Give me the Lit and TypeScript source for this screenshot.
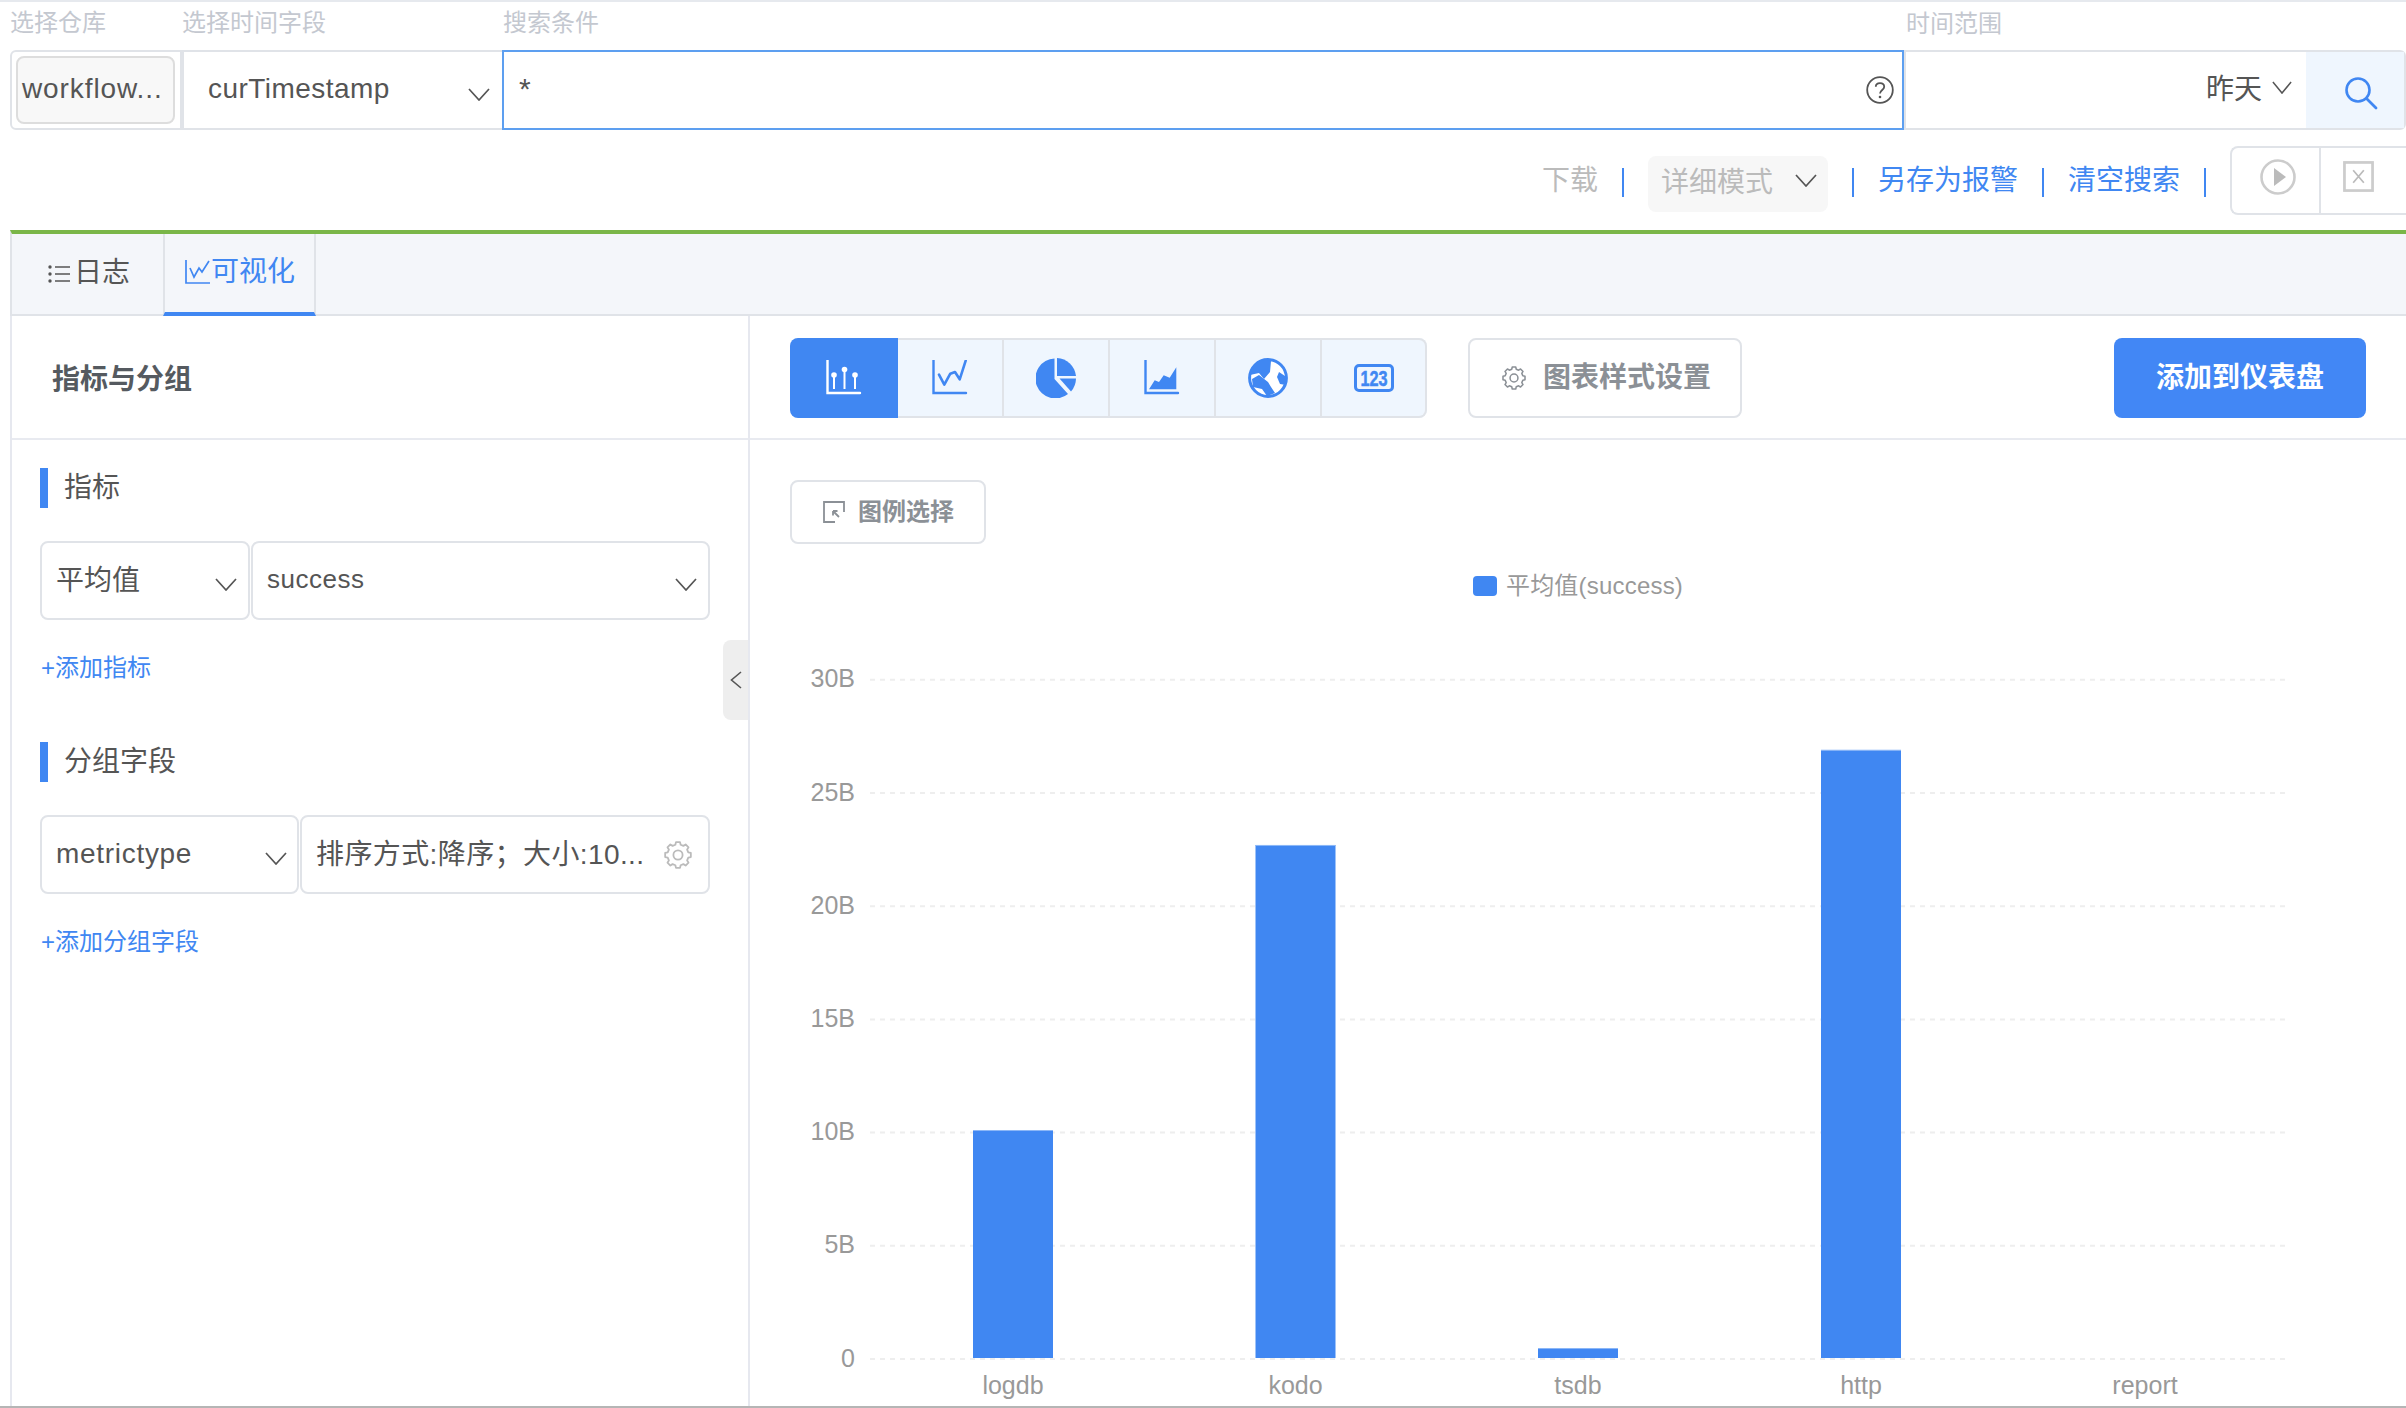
import { LitElement, html, css, svg } from "lit";
import { customElement } from "lit/decorators.js";

const BLUE = "#4087f2";

function gearPath(cx: number, cy: number, ro: number, ri: number, teeth = 8) {
  let d = "";
  const step = (Math.PI * 2) / teeth;
  for (let i = 0; i < teeth; i++) {
    const a = i * step - Math.PI / 2;
    const pts: [number, number][] = [
      [ro, a - step * 0.2],
      [ro, a + step * 0.2],
      [ri, a + step * 0.32],
      [ri, a + step * 0.68],
    ];
    for (const [r, t] of pts) {
      d += `${d ? "L" : "M"}${(cx + r * Math.cos(t)).toFixed(2)} ${(cy + r * Math.sin(t)).toFixed(2)}`;
    }
  }
  return d + "Z";
}

const chevron = (w = 22, h = 13) => html`<svg class="chev" width=${w} height=${h} viewBox="0 0 22 13" preserveAspectRatio="none"><path d="M1 1 L11 12 L21 1" fill="none" stroke="#555" stroke-width="1.7"/></svg>`;

const gear = (size: number, color: string) => html`<svg width=${size} height=${size} viewBox="0 0 28 28"><path d=${gearPath(14, 14, 13, 10.6)} fill="none" stroke=${color} stroke-width="1.8" stroke-linejoin="round"/><circle cx="14" cy="14" r="4.6" fill="none" stroke=${color} stroke-width="1.8"/></svg>`;

const chartIcons = [
  svg`<path d="M1.5 0 V33 H34" fill="none" stroke="currentColor" stroke-width="2.4" stroke-linecap="round"/><g fill="currentColor"><circle cx="8" cy="15" r="2.8"/><circle cx="18.5" cy="9.5" r="2.8"/><circle cx="29" cy="15" r="2.8"/></g><path d="M8 15V29M18.5 9.5V29M29 15V29" stroke="currentColor" stroke-width="2"/>`,
  svg`<path d="M1.5 0 V33 H34" fill="none" stroke="currentColor" stroke-width="2.4" stroke-linecap="round"/><path d="M7 14.7 L12.3 24.7 L18.3 13.7 L23 12 L27.7 19.3 L33.7 .7" fill="none" stroke="currentColor" stroke-width="2.6" stroke-linejoin="round" stroke-linecap="round"/>`,
  svg`<g fill="currentColor"><path d="M18.5 .5 A20 20 0 1 0 32 36 L18.5 21 Z"/><path d="M21 0 A20 20 0 0 1 40 18 L21 18 Z"/><path d="M23.5 20.5 L40 20.5 A20 20 0 0 1 35 33.5 Z"/></g>`,
  svg`<path d="M1.5 0 V33 H34" fill="none" stroke="currentColor" stroke-width="2.4" stroke-linecap="round"/><path fill="currentColor" d="M5 29.3 L10.7 20.3 L15 22 L19.7 15.3 L25.7 17.7 L32.3 7.3 V29.3 Z"/>`,
  svg`<circle cx="20" cy="20" r="18.4" fill="#fff" stroke="currentColor" stroke-width="3"/><g fill="currentColor"><path d="M2 17 L6 8 L12 2 L23 3 L22 14 L16 21 L11 15 Z"/><path d="M4 21 L11 17 L20 24 L23 29 L27 35 L19 38 L14 31 L5 29 Z"/><path d="M31 14 L37 18 L38 27 L32 26 L29 19 Z"/></g>`,
  svg`<rect x="1.5" y="7.5" width="37" height="25" rx="3.5" fill="none" stroke="currentColor" stroke-width="3"/><text transform="translate(20 28) scale(.74 1)" text-anchor="middle" fill="currentColor" stroke="currentColor" stroke-width=".5" font-family="'Liberation Sans',sans-serif" font-weight="700" font-size="22">123</text>`,
];
const iconBoxes: [number, number][] = [[36, 36], [36, 36], [40, 40], [36, 36], [40, 40], [40, 40]];

const bars = [
  { label: "logdb", cx: 1013, v: 10.07 },
  { label: "kodo", cx: 1295.5, v: 22.66 },
  { label: "tsdb", cx: 1578, v: 0.44 },
  { label: "http", cx: 1861, v: 26.86 },
  { label: "report", cx: 2145, v: 0 },
];

@customElement("app-root")
export class AppRoot extends LitElement {
  static styles = css`
    :host { display: block; width: 2406px; height: 1408px; overflow: hidden; background: #fff; color: #555;
      font-family: "Liberation Sans", "Noto Sans CJK SC", sans-serif; box-sizing: border-box; border-top: 2px solid #e6e9ee; }
    * { box-sizing: border-box; }
    .labels { height: 48px; display: flex; align-items: center; padding: 0 0 12px 10px; color: #c4c8d0; font-size: 24px; }
    .labels span:nth-child(1) { width: 172px; }
    .labels span:nth-child(2) { width: 321px; }
    .labels span:nth-child(3) { width: 1403px; }
    .labels span:nth-child(4) { padding-top: 3px; }
    .query { height: 80px; margin-left: 10px; display: flex; font-size: 28px; color: #555; }
    .cell { border: 2px solid #e0e3e8; display: flex; align-items: center; }
    .repo { width: 174px; border-right-width: 4px; border-radius: 6px 0 0 6px; padding-left: 4px; }
    .repo div { width: 159px; height: 68px; background: #f8f8f8; border: 2px solid #ddd; border-radius: 8px; display: flex; align-items: center; padding: 0 0 3px 4px; letter-spacing: .9px; white-space: nowrap; }
    .tsf { width: 318px; border-left: 0; border-right: 0; justify-content: space-between; padding: 0 12px 0 24px; letter-spacing: .45px; }
    .tsf span { padding-bottom: 2px; }
    .tsf .chev { margin-top: 8px; }
    .search { width: 1402px; border-color: #5d9ff0; justify-content: space-between; padding: 0 8px 0 15px; }
    .star { margin-top: -3px; font-size: 30px; }
    .range { flex: 1; border-left: 2px solid #e0e3e8; border-radius: 0 6px 6px 0; justify-content: flex-end; align-items: stretch; }
    .rangeval { display: flex; align-items: center; gap: 10px; padding-right: 14px; }
    .rangeval span { margin-top: -6px; }
    .rangeval .chev { margin-top: -6px; }
    .go { width: 98px; background: #eff6fe; display: flex; align-items: center; justify-content: center; padding: 6px 0 0 12px; }
    .actions { height: 100px; padding-top: 16px; display: flex; justify-content: flex-end; align-items: flex-start; gap: 24px; font-size: 28px; }
    .actions > * { height: 69px; display: flex; align-items: center; }
    .up { padding-bottom: 6px; }
    .muted { color: #bbb; }
    .sep { width: 2px; height: 29px !important; background: #4087f2; margin-top: 22px; }
    .mode { width: 180px; height: 56px !important; margin-top: 10px; background: #f7f7f7; border-radius: 8px; color: #bbb; padding: 0 11px 0 13px; justify-content: space-between; }
    .mode span { padding-bottom: 8px; }
    .mode .chev { margin-bottom: 8px; }
    .link { color: #4087f2; }
    .ctrl { width: 176px; border: 2px solid #e0e3e8; border-right: 0; border-radius: 8px 0 0 8px; }
    .ctrl div { height: 100%; display: flex; align-items: center; justify-content: center; padding-bottom: 8px; }
    .ctrl div:first-child { width: 89px; border-right: 2px solid #e0e3e8; padding-left: 4px; }
    .ctrl div:last-child { flex: 1; padding-right: 10px; }
    .main { height: 1178px; display: flex; flex-direction: column; border-bottom: 2px solid #b5b5b5; padding-left: 10px; }
    .tabs { height: 86px; flex: none; border-top: 4px solid #7ab648; border-left: 2px solid #e0e3e8; border-bottom: 2px solid #e0e3e8; background: #f4f6fa; display: flex; font-size: 28px; }
    .tab { width: 151px; height: 80px; display: flex; align-items: center; padding-left: 36px; gap: 4px; color: #555; }
    .tab span { padding-bottom: 8px; }
    .tab.on { width: 153px; color: #4087f2; border-left: 2px solid #e0e3e8; border-right: 2px solid #e0e3e8; border-bottom: 4px solid #4087f2; height: 82px; padding: 0 0 2px 20px; gap: 1px; }
    .tab.on span { padding-bottom: 6px; }
    .body { flex: 1; display: flex; min-height: 0; border-left: 2px solid #e6e8ef; }
    .left { width: 738px; flex: none; border-right: 2px solid #e6e8ef; position: relative; }
    .lhead { height: 124px; border-bottom: 2px solid #e8eaf0; display: flex; align-items: center; padding-left: 40px; font-size: 28px; font-weight: 700; color: #555a60; }
    .lbody { padding: 28px 38px 0 28px; }
    .sect { height: 40px; border-left: 8px solid #4087f2; padding: 0 0 6px 16px; display: flex; align-items: center; font-size: 28px; color: #555; }
    .sels { display: flex; gap: 1px; height: 79px; margin-top: 33px; font-size: 28px; }
    .sel { border: 2px solid #e0e3e8; border-radius: 8px; display: flex; align-items: center; justify-content: space-between; padding: 0 11px 0 14px; white-space: nowrap; min-width: 0; }
    .sel .chev { margin-top: 8px; }
    .w210 { width: 210px; }
    .w259 { width: 259px; padding-right: 10px; }
    .grow { flex: 1; }
    .add { margin-top: 31px; height: 34px; line-height: 34px; font-size: 24px; color: #4087f2; padding-left: 1px; }
    .gap { margin-top: 57px; }
    .ltxt { letter-spacing: .7px; padding-bottom: 2px; }
    .sm { font-size: 26px; letter-spacing: .5px; padding-bottom: 2px; }
    .sort { padding-right: 16px; }
    .sort span { letter-spacing: .4px; }
    .handle { position: absolute; right: 0; top: 324px; width: 25px; height: 80px; background: #eee; border-radius: 8px 0 0 8px; display: flex; align-items: center; justify-content: center; }
    .right { flex: 1; min-width: 0; display: flex; flex-direction: column; }
    .rhead { height: 124px; border-bottom: 2px solid #e8eaf0; padding: 22px 40px 0 40px; display: flex; align-items: flex-start; }
    .types { display: flex; width: 637px; height: 80px; border-radius: 8px; background: #eff6fe; }
    .type { width: 106px; display: flex; align-items: center; justify-content: center; color: #4087f2; border: 2px solid #e0e3e8; border-left: 0; }
    .type:last-child { width: 105px; border-radius: 0 8px 8px 0; }
    .type.on { background: #4087f2; color: #fff; border: 0; width: 108px; border-radius: 8px 0 0 8px; }
    .styl { margin-left: 41px; width: 274px; height: 80px; border: 2px solid #e0e3e8; border-radius: 8px; display: flex; align-items: center; padding-left: 32px; gap: 17px; font-size: 28px; font-weight: 700; color: #8b9096; }
    .addb { margin-left: auto; width: 252px; height: 80px; border-radius: 8px; background: #4287f5; color: #fff; font-size: 28px; font-weight: 700; display: flex; align-items: center; justify-content: center; }
    .pick { margin: 40px 0 0 40px; width: 196px; height: 64px; border: 2px solid #e0e3e8; border-radius: 8px; display: flex; align-items: center; padding-left: 31px; gap: 13px; font-size: 24px; font-weight: 700; color: #8b9096; }
    .legend { margin-top: 32px; height: 20px; display: flex; justify-content: center; align-items: center; gap: 9px; font-size: 24px; color: #999; white-space: nowrap; letter-spacing: .2px; }
    .swatch { width: 24px; height: 20px; background: #4087f2; border-radius: 4px; }
    .chart { display: block; flex: 1; width: 100%; min-height: 0; }
    .chart text { font-family: "Liberation Sans", sans-serif; font-size: 25px; fill: #999; }
  `;

  private renderChart() {
    const ox = 750, oy = 596, y0 = 1359, unit = 22.64;
    const ticks = [0, 5, 10, 15, 20, 25, 30];
    return html`<svg class="chart" viewBox="0 0 1656 810">
      ${ticks.map((t) => {
        const y = y0 - t * unit - oy;
        return svg`<line x1=${870 - ox} x2=${2287 - ox} y1=${y} y2=${y} stroke="#eeeeee" stroke-width="2" stroke-dasharray="5 5"/>
        <text x=${855 - ox} y=${y + 1} text-anchor="end" dominant-baseline="middle">${t === 0 ? "0" : `${t}B`}</text>`;
      })}
      ${bars.map((b) => {
        const h = b.v * unit;
        const top = y0 - 1 - h - oy;
        return svg`${h > 0 ? svg`<rect x=${b.cx - 40 - ox} y=${top} width="80" height=${h} fill=${BLUE}/><rect x=${b.cx - 40 - ox} y=${top} width="80" height="1" fill="#8db8f7"/>` : ""}
        <text x=${b.cx - ox} y=${1387 - oy} text-anchor="middle" dominant-baseline="middle">${b.label}</text>`;
      })}
    </svg>`;
  }

  render() {
    return html`
      <div class="labels"><span>选择仓库</span><span>选择时间字段</span><span>搜索条件</span><span>时间范围</span></div>
      <div class="query">
        <div class="cell repo"><div>workflow...</div></div>
        <div class="cell tsf"><span>curTimestamp</span>${chevron()}</div>
        <div class="cell search"><span class="star">*</span>
          <svg width="28" height="28" viewBox="0 0 28 28"><circle cx="14" cy="14" r="12.8" fill="none" stroke="#555" stroke-width="1.8"/><path d="M9.8 10.8 C9.8 5.8 18.2 5.8 18.2 10.8 C18.2 14 14 14 14 17.6" fill="none" stroke="#555" stroke-width="1.8"/><circle cx="14" cy="21" r="1.3" fill="#555"/></svg>
        </div>
        <div class="cell range">
          <div class="rangeval"><span>昨天</span>${chevron(20, 13)}</div>
          <div class="go"><svg width="34" height="34" viewBox="0 0 34 34"><circle cx="14" cy="14" r="11.5" fill="none" stroke=${BLUE} stroke-width="2.6"/><path d="M22.5 22.5 L32 32" stroke=${BLUE} stroke-width="2.8" stroke-linecap="round"/></svg></div>
        </div>
      </div>
      <div class="actions">
        <span class="muted up">下载</span>
        <i class="sep"></i>
        <div class="mode"><span>详细模式</span>${chevron()}</div>
        <i class="sep"></i>
        <span class="link up">另存为报警</span>
        <i class="sep"></i>
        <span class="link up">清空搜索</span>
        <i class="sep"></i>
        <div class="ctrl">
          <div><svg width="36" height="36" viewBox="0 0 36 36"><circle cx="18" cy="18" r="16.5" fill="none" stroke="#ccc" stroke-width="2.6"/><path d="M14 9 L26 18 L14 27 Z" fill="#bbb"/></svg></div>
          <div><svg width="31" height="31" viewBox="0 0 32 32"><rect x="1.5" y="1.5" width="29" height="29" fill="none" stroke="#ccc" stroke-width="2.8"/><path d="M10.5 9.5 L21.5 22.5 M21.5 9.5 L10.5 22.5" stroke="#bbb" stroke-width="1.8"/></svg></div>
        </div>
      </div>
      <div class="main">
        <div class="tabs">
          <div class="tab"><svg width="22" height="20" viewBox="0 0 22 20"><g fill="#555"><circle cx="2" cy="3" r="1.7"/><circle cx="2" cy="10" r="1.7"/><circle cx="2" cy="17" r="1.7"/></g><path d="M7 3H22M7 10H22M7 17H22" stroke="#555" stroke-width="1.7"/></svg><span>日志</span></div>
          <div class="tab on"><svg width="25" height="24" viewBox="0 0 25 24"><path d="M1 0V23H25" fill="none" stroke=${BLUE} stroke-width="1.7"/><path d="M5 8 L9 17 L14 8 L17 12 L24 1" fill="none" stroke=${BLUE} stroke-width="1.7"/></svg><span>可视化</span></div>
        </div>
        <div class="body">
          <div class="left">
            <div class="lhead">指标与分组</div>
            <div class="lbody">
              <div class="sect">指标</div>
              <div class="sels">
                <div class="sel w210"><span class="up">平均值</span>${chevron()}</div>
                <div class="sel grow"><span class="sm">success</span>${chevron()}</div>
              </div>
              <div class="add">+添加指标</div>
              <div class="sect gap">分组字段</div>
              <div class="sels">
                <div class="sel w259"><span class="ltxt">metrictype</span>${chevron()}</div>
                <div class="sel grow sort"><span class="up">排序方式:降序；大小:10...</span>${gear(28, "#bbb")}</div>
              </div>
              <div class="add">+添加分组字段</div>
            </div>
            <div class="handle"><svg width="12" height="18" viewBox="0 0 12 18"><path d="M11 1 L1.5 9 L11 17" fill="none" stroke="#555" stroke-width="1.6"/></svg></div>
          </div>
          <div class="right">
            <div class="rhead">
              <div class="types">
                ${chartIcons.map((ic, i) => html`<div class="type ${i === 0 ? "on" : ""}"><svg width=${iconBoxes[i][0]} height=${iconBoxes[i][1]} viewBox="0 0 ${iconBoxes[i][0]} ${iconBoxes[i][1]}">${ic}</svg></div>`)}
              </div>
              <div class="styl">${gear(24, "#8b9096")}<span class="up">图表样式设置</span></div>
              <div class="addb"><span class="up">添加到仪表盘</span></div>
            </div>
            <div class="pick"><svg width="22" height="22" viewBox="0 0 22 22"><path d="M21 11V1H1V21H12" fill="none" stroke="#8b9096" stroke-width="1.8"/><path d="M10 10L16 16M10 10H14.5M10 10V14.5" fill="none" stroke="#8b9096" stroke-width="1.8"/></svg><span class="up">图例选择</span></div>
            <div class="legend"><i class="swatch"></i><span class="up">平均值(success)</span></div>
            ${this.renderChart()}
          </div>
        </div>
      </div>
    `;
  }
}
